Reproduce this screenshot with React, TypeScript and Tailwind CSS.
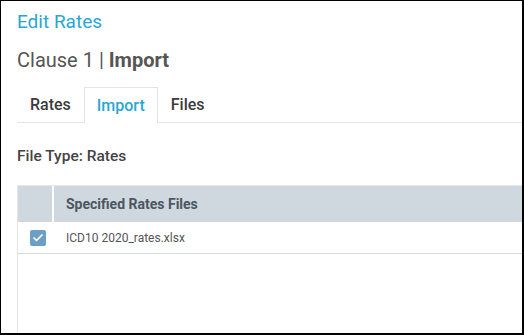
import { Check } from "lucide-react";

const tabs = ["Rates", "Import", "Files"];

const Tabs = ({ active }: { active: string }) => (
  <div className="flex border-b border-[#e4e4e4] mt-[15px]">
    {tabs.map((t) =>
      t === active ? (
        <div
          key={t}
          className="px-[12px] h-[36px] flex items-center border border-b-0 border-[#e4e4e4] bg-white -mb-px text-[16px] font-medium text-[#29a7d1]"
        >
          {t}
        </div>
      ) : (
        <div
          key={t}
          className="px-[12px] h-[35px] flex items-center border border-transparent text-[16px] font-medium text-[#3b3b3b]"
        >
          {t}
        </div>
      )
    )}
  </div>
);

const App = () => {
  return (
    <div
      className="w-[524px] h-[335px] overflow-hidden bg-white border-l border-t border-r-2 border-b-2 border-black flex flex-col"
      style={{ fontFamily: "Roboto, 'Liberation Sans', sans-serif" }}
    >
      <div className="pl-[16px] pt-[10px] flex flex-col flex-1 min-h-0">
        <div className="text-[19px] leading-[22px] text-[#29a7d1]">Edit Rates</div>
        <div className="mt-[15px] text-[20px] leading-[24px] text-[#555]">
          Clause 1 | <span className="font-bold">Import</span>
        </div>
        <Tabs active="Import" />
        <div className="mt-[24px] text-[15.5px] leading-[18px] font-medium text-[#444]">
          File Type: Rates
        </div>
        <div className="mt-[20px] flex-1 w-[520px] border-l border-[#e6e6e6] flex flex-col">
          <div className="flex h-[37px] border-t border-[#e6e6e6]">
            <div className="w-[34px] bg-[#cfd8de]" />
            <div className="w-[2px] bg-white" />
            <div className="flex-1 bg-[#cfd8de] flex items-center pl-[12px] text-[14px] font-bold text-[#4b5660]">
              Specified Rates Files
            </div>
          </div>
          <div className="flex h-[32px] items-center border-b border-[#d3dbe0]">
            <div className="w-[36px] pl-[12px] flex">
              <div className="w-[16px] h-[16px] rounded-[2px] bg-[#6c9ec6] flex items-center justify-center">
                <Check className="w-[12px] h-[12px] text-white" strokeWidth={3.5} />
              </div>
            </div>
            <div className="pl-[12px] text-[12px] text-[#555]">ICD10 2020_rates.xlsx</div>
          </div>
        </div>
      </div>
    </div>
  );
};

export default App;
